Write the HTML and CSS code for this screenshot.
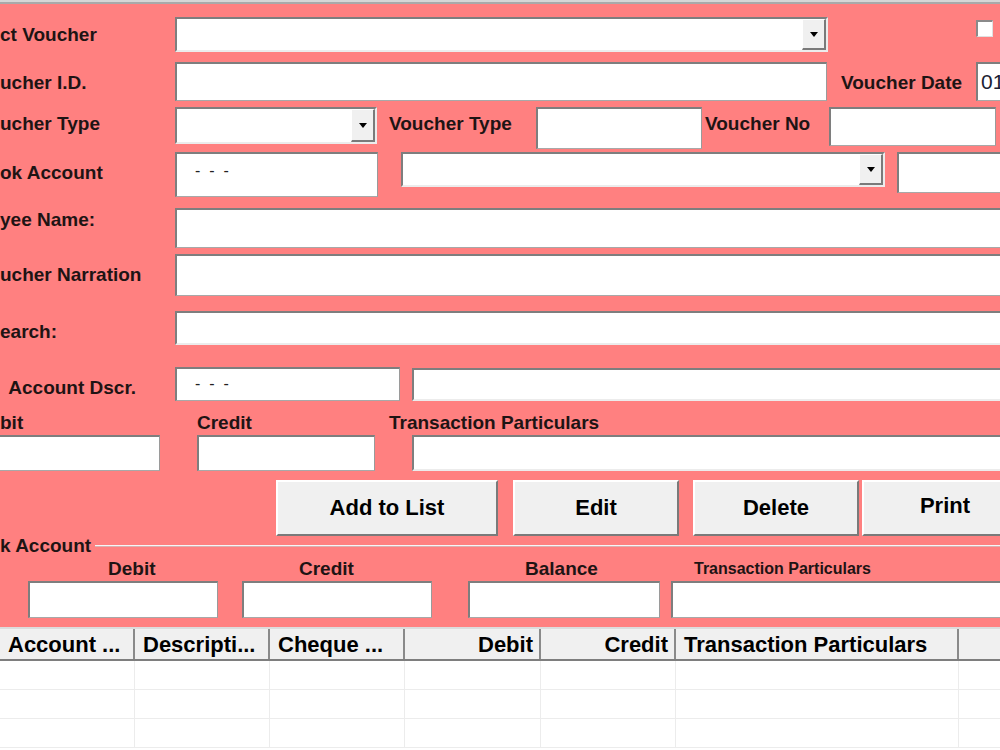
FILE: index.html
```html
<!DOCTYPE html>
<html>
<head>
<meta charset="utf-8">
<link rel="stylesheet" href="styles.css">
</head>
<body>
<div class="topbar"></div>
<div class="form">
  <div class="row r1">
    <div class="lbl lcol m8">ct Voucher</div>
    <div class="combo c-voucher"><span class="dd"><i class="tri"></i></span></div>
    <div class="chk"></div>
  </div>
  <div class="row r2">
    <div class="lbl lcol m11">ucher I.D.</div>
    <div class="tb t-vid"></div>
    <div class="lbl l-vdate m11">Voucher Date</div>
    <div class="tb t-date"><span class="datetxt">01</span></div>
  </div>
  <div class="row r3">
    <div class="lbl lcol m7">ucher Type</div>
    <div class="combo c-vtype"><span class="dd"><i class="tri"></i></span></div>
    <div class="lbl l-vtype m7">Voucher Type</div>
    <div class="tb t-vtype"></div>
    <div class="lbl l-vno m7">Voucher No</div>
    <div class="tb t-vno"></div>
  </div>
  <div class="row r4">
    <div class="lbl lcol m11">ok Account</div>
    <div class="tb t-bank"><span class="dash">- &nbsp;- &nbsp;-</span></div>
    <div class="combo c-bank"><span class="dd"><i class="tri"></i></span></div>
    <div class="tb t-bank2"></div>
  </div>
  <div class="row r5">
    <div class="lbl lcol m2">yee Name:</div>
    <div class="tb t-wide h40"></div>
  </div>
  <div class="row r6">
    <div class="lbl lcol m11">ucher Narration</div>
    <div class="tb t-wide h42"></div>
  </div>
  <div class="row r7">
    <div class="lbl lcol m11">earch:</div>
    <div class="combo t-wide h34"></div>
  </div>
  <div class="row r8">
    <div class="lbl lcol m11 ind3">&nbsp;Account Dscr.</div>
    <div class="tb t-acc"><span class="dash dash2">- &nbsp;- &nbsp;-</span></div>
    <div class="combo t-acc2"></div>
  </div>
  <div class="row r9">
    <div class="lbl l-debit">bit</div>
    <div class="lbl l-credit">Credit</div>
    <div class="lbl">Transaction Particulars</div>
  </div>
  <div class="row r10">
    <div class="tb t-debit"></div>
    <div class="tb t-credit"></div>
    <div class="combo t-part"></div>
  </div>
  <div class="row r11">
    <button class="btn b-add">Add to List</button>
    <button class="btn b-edit">Edit</button>
    <button class="btn b-del">Delete</button>
    <button class="btn b-print">Print</button>
  </div>
  <div class="group">
    <div class="ghead">
      <span class="lbl glegend">k Account</span>
      <span class="gline"></span>
    </div>
    <div class="row glabels">
      <div class="lbl g-debit">Debit</div>
      <div class="lbl g-credit">Credit</div>
      <div class="lbl g-bal">Balance</div>
      <div class="lbl g-part">Transaction Particulars</div>
    </div>
    <div class="row gboxes">
      <div class="tb gb-debit"></div>
      <div class="tb gb-credit"></div>
      <div class="tb gb-bal"></div>
      <div class="tb gb-part"></div>
    </div>
  </div>
</div>
<div class="grid">
  <div class="ghdr">
    <div class="cell c1">Account ...</div>
    <div class="cell c2">Descripti...</div>
    <div class="cell c3">Cheque ...</div>
    <div class="cell c4 right">Debit</div>
    <div class="cell c5 right">Credit</div>
    <div class="cell c6">Transaction Particulars</div>
    <div class="cell c7"></div>
  </div>
  <div class="grow">
    <div class="bcell c1"></div><div class="bcell c2"></div><div class="bcell c3"></div><div class="bcell c4"></div><div class="bcell c5"></div><div class="bcell c6"></div><div class="bcell c7"></div>
  </div>
  <div class="grow">
    <div class="bcell c1"></div><div class="bcell c2"></div><div class="bcell c3"></div><div class="bcell c4"></div><div class="bcell c5"></div><div class="bcell c6"></div><div class="bcell c7"></div>
  </div>
  <div class="grow">
    <div class="bcell c1"></div><div class="bcell c2"></div><div class="bcell c3"></div><div class="bcell c4"></div><div class="bcell c5"></div><div class="bcell c6"></div><div class="bcell c7"></div>
  </div>
</div>
</body>
</html>
```
FILE: styles.css
```css
html, body {
  margin: 0;
  padding: 0;
  width: 1000px;
  height: 750px;
  overflow: hidden;
  background: #ffffff;
  font-family: "Liberation Sans", Arial, sans-serif;
}
.topbar {
  height: 2px;
  background: #d6d6d6;
  border-bottom: 2px solid #a9a9a9;
}
.form {
  width: 1060px;
  background: #ff8080;
  padding-top: 13px;
  padding-bottom: 4px;
}
.row {
  display: flex;
  align-items: flex-start;
}
.r1 { height: 45px; }
.r2 { height: 45px; }
.r3 { height: 45px; }
.r4 { height: 56px; }
.r5 { height: 46px; }
.r6 { height: 57px; }
.r7 { height: 56px; }
.r8 { height: 46px; }
.r9 { height: 22px; }
.r10 { height: 45px; }
.r11 { height: 59px; }

.lbl {
  font-size: 19px;
  line-height: 20px;
  font-weight: bold;
  color: #1e1414;
  white-space: nowrap;
}
.lcol { width: 175px; flex: none; }
.ind3 { width: 172px; padding-left: 3px; }
.m2 { margin-top: 2px; }
.m7 { margin-top: 7px; }
.m8 { margin-top: 8px; }
.m11 { margin-top: 11px; }

.tb, .combo {
  box-sizing: border-box;
  background: #ffffff;
  position: relative;
  flex: none;
}
.tb {
  border-top: 2px solid #7e7e7e;
  border-left: 2px solid #7e7e7e;
  border-right: 1px solid #9a9a9a;
  border-bottom: 1px solid #a8a8a8;
}
.combo {
  border-top: 2px solid #7e7e7e;
  border-left: 2px solid #7e7e7e;
  border-right: 2px solid #ececec;
  border-bottom: 2px solid #ececec;
}
.dd {
  position: absolute;
  right: 0;
  top: 0;
  bottom: 0;
  width: 21px;
  background: #f0f0f0;
  border-top: 1px solid #ffffff;
  border-left: 1px solid #ffffff;
  border-right: 2px solid #7a7a7a;
  border-bottom: 2px solid #7a7a7a;
  display: flex;
  align-items: center;
  justify-content: center;
}
.tri {
  display: block;
  width: 0;
  height: 0;
  border-left: 4px solid transparent;
  border-right: 4px solid transparent;
  border-top: 5px solid #000;
}
.chk {
  box-sizing: border-box;
  width: 17px;
  height: 17px;
  margin-left: 148px;
  margin-top: 3px;
  background: #fff;
  border-top: 2px solid #8a8a8a;
  border-left: 2px solid #8a8a8a;
  border-right: 1px solid #e0e0e0;
  border-bottom: 1px solid #e0e0e0;
}
.c-voucher { width: 653px; height: 35px; }
.t-vid { width: 652px; height: 39px; }
.l-vdate { margin-left: 14px; width: 135px; flex: none; }
.t-date { width: 60px; height: 39px; }
.datetxt {
  position: absolute;
  left: 3px;
  top: 7px;
  font-size: 21px;
  line-height: 22px;
  color: #1a2233;
}
.c-vtype { width: 202px; height: 37px; }
.l-vtype { margin-left: 12px; width: 147px; flex: none; }
.t-vtype { width: 166px; height: 42px; }
.l-vno { margin-left: 3px; width: 124px; flex: none; }
.t-vno { width: 167px; height: 39px; }
.t-bank { width: 203px; height: 45px; }
.dash {
  position: absolute;
  left: 18px;
  top: 8px;
  font-size: 16px;
  line-height: 18px;
  color: #222;
}
.dash2 { top: 6px; }
.c-bank { width: 484px; height: 35px; margin-left: 23px; }
.t-bank2 { width: 120px; height: 41px; margin-left: 12px; }
.t-wide { width: 860px; }
.h40 { height: 40px; }
.h42 { height: 42px; }
.h34 { height: 34px; }
.t-acc { width: 225px; height: 34px; }
.t-acc2 { width: 620px; height: 33px; margin-top: 1px; margin-left: 12px; }

.l-debit { width: 197px; flex: none; }
.l-credit { width: 192px; flex: none; }
.t-debit { width: 160px; height: 36px; border-left: none; }
.t-credit { width: 178px; height: 36px; margin-left: 37px; }
.t-part { width: 620px; height: 36px; margin-left: 37px; }

.btn {
  box-sizing: border-box;
  height: 56px;
  background: #f0f0f0;
  border-top: 2px solid #ffffff;
  border-left: 2px solid #ffffff;
  border-right: 2px solid #7a7a7a;
  border-bottom: 2px solid #7a7a7a;
  font-family: "Liberation Sans", Arial, sans-serif;
  font-weight: bold;
  font-size: 22px;
  color: #000;
  padding: 0;
  flex: none;
}
.b-add { width: 222px; margin-left: 276px; }
.b-edit { width: 166px; margin-left: 15px; }
.b-del { width: 166px; margin-left: 14px; }
.b-print { width: 166px; margin-left: 3px; padding-bottom: 4px; }

.group { padding-bottom: 5px; }
.ghead {
  display: flex;
  align-items: center;
  height: 14px;
}
.glegend { line-height: 14px; }
.gline {
  flex: 1;
  height: 1px;
  background: #f6f6f6;
  border-bottom: 1px solid #d9b0b0;
  margin-left: 4px;
}
.glabels { height: 22px; margin-top: 6px; }
.g-debit { margin-left: 108px; width: 191px; flex: none; }
.g-credit { width: 226px; flex: none; }
.g-bal { width: 169px; flex: none; }
.g-part { font-size: 16px; }
.gboxes { height: 37px; }
.gb-debit { width: 190px; height: 37px; margin-left: 28px; }
.gb-credit { width: 190px; height: 37px; margin-left: 24px; }
.gb-bal { width: 192px; height: 37px; margin-left: 36px; }
.gb-part { width: 340px; height: 37px; margin-left: 11px; }

.grid {
  width: 1000px;
  background: #ffffff;
}
.ghdr {
  display: flex;
  height: 34px;
  box-sizing: border-box;
  border-top: 2px solid #dcdcdc;
  border-bottom: 2px solid #7e7e7e;
  background: #f0f0f0;
}
.cell {
  box-sizing: border-box;
  flex: none;
  height: 100%;
  border-right: 2px solid #8a8a8a;
  font-weight: bold;
  font-size: 22px;
  line-height: 32px;
  color: #000;
  padding-left: 8px;
  white-space: nowrap;
  overflow: hidden;
}
.right { text-align: right; padding-left: 0; padding-right: 6px; }
.c1 { width: 135px; }
.c2 { width: 135px; }
.c3 { width: 135px; }
.c4 { width: 136px; }
.c5 { width: 135px; }
.c6 { width: 283px; }
.c7 { width: 41px; border-right: none; }
.grow {
  display: flex;
  height: 29px;
  box-sizing: border-box;
  border-bottom: 1px solid #ececec;
}
.bcell {
  box-sizing: border-box;
  flex: none;
  height: 100%;
  border-right: 1px solid #ececec;
}
.bcell.c7 { border-right: none; }
```
